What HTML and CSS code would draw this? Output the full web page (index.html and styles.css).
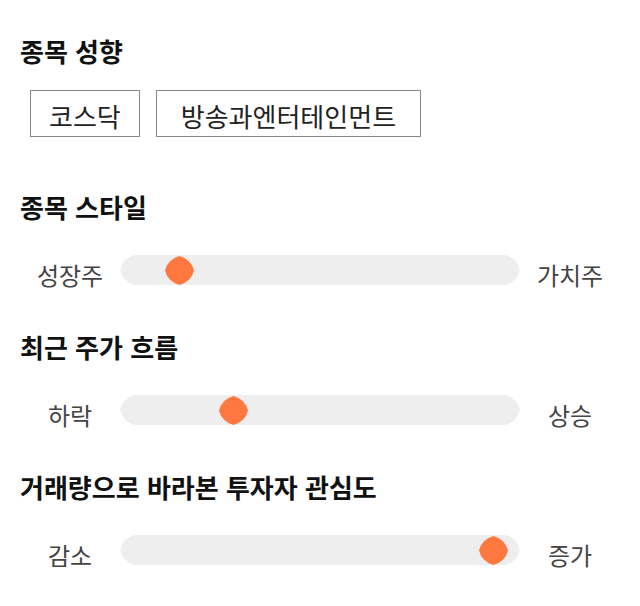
FILE: index.html
```html
<!DOCTYPE html>
<html lang="ko">
<head>
<meta charset="utf-8">
<title>종목 성향</title>
<link rel="stylesheet" href="styles.css">
</head>
<body>
<main class="page">
  <section class="group group-tags">
    <h2 class="title">종목 성향</h2>
    <div class="tags">
      <span class="tag">코스닥</span>
      <span class="tag tag-wide">방송과엔터테인먼트</span>
    </div>
  </section>

  <section class="group">
    <h2 class="title">종목 스타일</h2>
    <div class="scale">
      <span class="label">성장주</span>
      <div class="track">
        <svg class="track-bg" viewBox="0 0 400 30" width="400" height="30"><path d="M0,15 A20,20 0 0 1 15,0 H385 A20,20 0 0 1 400,15 A20,20 0 0 1 385,30 H15 A20,20 0 0 1 0,15 Z" fill="#eeeeee"/></svg>
        <svg class="thumb" style="left: 44.5px" viewBox="0 0 29 29" width="29" height="29"><path d="M14.5,0 A19,19 0 0 1 29,14.5 A19,19 0 0 1 14.5,29 A19,19 0 0 1 0,14.5 A19,19 0 0 1 14.5,0 Z" fill="#ff7840"/></svg>
      </div>
      <span class="label">가치주</span>
    </div>
  </section>

  <section class="group">
    <h2 class="title">최근 주가 흐름</h2>
    <div class="scale">
      <span class="label">하락</span>
      <div class="track">
        <svg class="track-bg" viewBox="0 0 400 30" width="400" height="30"><path d="M0,15 A20,20 0 0 1 15,0 H385 A20,20 0 0 1 400,15 A20,20 0 0 1 385,30 H15 A20,20 0 0 1 0,15 Z" fill="#eeeeee"/></svg>
        <svg class="thumb" style="left: 98.5px" viewBox="0 0 29 29" width="29" height="29"><path d="M14.5,0 A19,19 0 0 1 29,14.5 A19,19 0 0 1 14.5,29 A19,19 0 0 1 0,14.5 A19,19 0 0 1 14.5,0 Z" fill="#ff7840"/></svg>
      </div>
      <span class="label">상승</span>
    </div>
  </section>

  <section class="group">
    <h2 class="title">거래량으로 바라본 투자자 관심도</h2>
    <div class="scale">
      <span class="label">감소</span>
      <div class="track">
        <svg class="track-bg" viewBox="0 0 400 30" width="400" height="30"><path d="M0,15 A20,20 0 0 1 15,0 H385 A20,20 0 0 1 400,15 A20,20 0 0 1 385,30 H15 A20,20 0 0 1 0,15 Z" fill="#eeeeee"/></svg>
        <svg class="thumb" style="left: 358.5px" viewBox="0 0 29 29" width="29" height="29"><path d="M14.5,0 A19,19 0 0 1 29,14.5 A19,19 0 0 1 14.5,29 A19,19 0 0 1 0,14.5 A19,19 0 0 1 14.5,0 Z" fill="#ff7840"/></svg>
      </div>
      <span class="label">증가</span>
    </div>
  </section>
</main>
</body>
</html>
```

FILE: styles.css
```css
html, body {
  margin: 0;
  padding: 0;
  background: #ffffff;
}

body {
  font-family: "Noto Sans CJK KR", "Noto Sans", sans-serif;
  color: #111111;
}

.page {
  padding: 35px 20px 40px 20px;
  display: flex;
  flex-direction: column;
  gap: 46px;
}

.group-tags {
  margin-bottom: 8px;
}

.title {
  margin: 0 0 32px 0;
  font-size: 26px;
  font-weight: 700;
  line-height: 32px;
  color: #111111;
}

.group-tags .title {
  margin-bottom: 23px;
}

.tags {
  display: flex;
  gap: 16px;
  margin-left: 10px;
}

.tag {
  border: 1px solid #888888;
  padding: 7px 18px 3px 18px;
  font-size: 26px;
  line-height: 35px;
  color: #222222;
}

.tag-wide {
  padding: 7px 24px 3px 24px;
}

.scale {
  display: grid;
  grid-template-columns: 100px 400px 100px;
  grid-template-rows: 30px;
  align-items: start;
}

.label {
  text-align: center;
  font-size: 24px;
  line-height: 30px;
  padding-top: 5px;
  color: #444444;
}

.track {
  position: relative;
  width: 400px;
  height: 30px;
}

.track-bg {
  display: block;
}

.thumb {
  position: absolute;
  top: 0.5px;
}
```
